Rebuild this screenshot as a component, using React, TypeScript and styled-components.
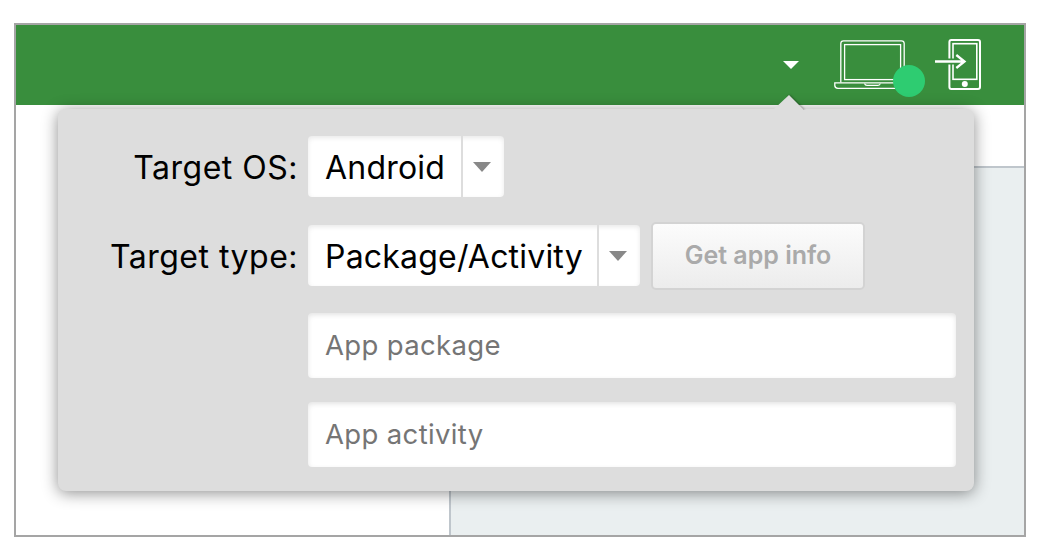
import React from "react";
import styled, { createGlobalStyle } from "styled-components";

const GlobalStyle = createGlobalStyle`
  *, *::before, *::after { box-sizing: border-box; }
  html, body { margin: 0; background: #fff; }
  body { font-family: Inter, "Liberation Sans", sans-serif; overflow: hidden; }
`;

const Page = styled.div`
  width: 1046px;
  height: 560px;
  padding: 23px 20px 23px 14px;
`;

const Frame = styled.div`
  position: relative;
  display: flex;
  flex-direction: column;
  height: 514px;
  border: 2px solid #a5a5a5;
  background: #fff;
`;

const Toolbar = styled.header`
  display: flex;
  justify-content: flex-end;
  align-items: flex-start;
  height: 80px;
  padding: 12px 41px 0 0;
  background: #398e3d;
`;

const ToolCaret = styled.svg`
  display: block;
  width: 18px;
  height: 10px;
  margin: 23px 33px 0 0;
`;

const LaptopIcon = styled.svg`
  display: block;
  width: 92px;
  height: 62px;
  margin-right: 8px;
`;

const PhoneIcon = styled.svg`
  display: block;
  width: 50px;
  height: 56px;
`;

const Workspace = styled.div`
  display: flex;
  flex: 1;
`;

const Sidebar = styled.div`
  width: 433px;
`;

const Canvas = styled.div`
  flex: 1;
  margin-top: 61px;
  border-top: 2px solid #bfc6cc;
  border-left: 2px solid #bfc6cc;
  background: #eaeff0;
`;

const Popover = styled.section`
  position: absolute;
  left: 42px;
  top: 84px;
  width: 916px;
  height: 382px;
  padding: 27px 18px 24px;
  display: flex;
  flex-direction: column;
  border-radius: 8px;
  background: #ddd;
  box-shadow: 0 2px 16px rgba(0, 0, 0, 0.45);
`;

const Tail = styled.svg`
  position: absolute;
  left: 712px;
  top: -16px;
  width: 40px;
  height: 17px;
`;

const Row = styled.div`
  display: flex;
  align-items: flex-start;
  height: 62px;
  margin-bottom: 27px;
`;

const Label = styled.label`
  width: 222px;
  margin-right: 10px;
  text-align: right;
  font-size: 32px;
  line-height: 64px;
  letter-spacing: 0.5px;
  white-space: nowrap;
  color: #000;
`;

const Select = styled.div<{ $width: number }>`
  display: flex;
  width: ${(p) => p.$width}px;
  height: 61px;
  border-radius: 4px;
  background: #fff;
  box-shadow: inset 0 2px 5px rgba(0, 0, 0, 0.09);
`;

const SelectValue = styled.span`
  flex: 1;
  padding-left: 17px;
  font-size: 32px;
  line-height: 64px;
  letter-spacing: 0.2px;
  white-space: nowrap;
  color: #000;
`;

const SelectArrow = styled.span`
  display: flex;
  align-items: center;
  justify-content: center;
  width: 43px;
  padding-right: 3px;
  border-left: 2px solid #ddd;
`;

const InfoButton = styled.button`
  width: 214px;
  height: 68px;
  margin: -3px 0 -4px 11px;
  padding: 0 0 2px;
  border: 2px solid #d3d3d3;
  border-radius: 5px;
  background: linear-gradient(#fcfcfc, #ececec);
  font: 600 25px Inter, sans-serif;
  letter-spacing: 0;
  white-space: nowrap;
  color: #aaa;
`;

const Fields = styled.div`
  display: flex;
  flex-direction: column;
  gap: 24px;
  margin: -1px 0 0 232px;
`;

const TextField = styled.input`
  width: 648px;
  height: 65px;
  padding: 0 17px 2px;
  border: 0;
  border-radius: 4px;
  outline: 0;
  background: #fff;
  box-shadow: inset 0 2px 5px rgba(0, 0, 0, 0.11);
  font: 400 27.5px Inter, sans-serif;
  letter-spacing: 0.35px;
  &::placeholder { color: #757575; opacity: 1; }
`;

const Down = () => (
  <svg width="18" height="10" viewBox="0 0 18 10">
    <path d="M0 0H18L9 10Z" fill="#888" />
  </svg>
);

export default function App() {
  return (
    <Page>
      <GlobalStyle />
      <Frame>
        <Toolbar>
          <ToolCaret viewBox="0 0 18 10">
            <path d="M1 1H17L9 9Z" fill="#fff" />
          </ToolCaret>
          <LaptopIcon viewBox="833 37 92 62" fill="none" stroke="#fff">
            <path d="M840.8 82.5V43.5Q840.8 40.8 843.5 40.8H901.5Q904.2 40.8 904.2 43.5V82.5" strokeWidth="1.3" />
            <rect x="844.6" y="44.6" width="56" height="35" strokeWidth="1.3" />
            <path d="M834.8 82.8H910V85.5Q910 88.3 907 88.3H838Q834.8 88.3 834.8 85.5Z" strokeWidth="1.3" />
            <path d="M864.5 83.5Q865 85.4 867 85.4H878Q880 85.4 880.3 83.5" strokeWidth="1.1" />
            <circle cx="909" cy="81" r="16" fill="#2ecc71" stroke="none" />
          </LaptopIcon>
          <PhoneIcon viewBox="933 37 50 56" fill="none" stroke="#fff">
            <rect x="949.4" y="39.9" width="30.6" height="49" rx="2" strokeWidth="2" />
            <rect x="953" y="43.7" width="23.8" height="35.6" strokeWidth="1.6" />
            <path d="M946 61.5H957" stroke="#398e3d" strokeWidth="6" />
            <path d="M935 61.5H964.5M956.3 55L964.5 61.5L956.3 68" strokeWidth="2.3" />
            <circle cx="964.8" cy="84" r="3" fill="#fff" stroke="none" />
          </PhoneIcon>
        </Toolbar>
        <Workspace>
          <Sidebar />
          <Canvas />
        </Workspace>
        <Popover>
          <Tail viewBox="0 0 40 17">
            <defs>
              <filter id="tail-shadow" x="-20%" y="-20%" width="150%" height="150%">
                <feGaussianBlur stdDeviation="1" />
              </filter>
            </defs>
            <path d="M20 2L35 17H30L17 4Z" fill="#000" opacity=".35" filter="url(#tail-shadow)" />
            <path d="M4 16L19 2L33 16V17H4Z" fill="#ddd" />
          </Tail>
          <Row>
            <Label>Target OS:</Label>
            <Select $width={196}>
              <SelectValue>Android</SelectValue>
              <SelectArrow><Down /></SelectArrow>
            </Select>
          </Row>
          <Row>
            <Label>Target type:</Label>
            <Select $width={332}>
              <SelectValue>Package/Activity</SelectValue>
              <SelectArrow><Down /></SelectArrow>
            </Select>
            <InfoButton>Get app info</InfoButton>
          </Row>
          <Fields>
            <TextField placeholder="App package" />
            <TextField placeholder="App activity" />
          </Fields>
        </Popover>
      </Frame>
    </Page>
  );
}
